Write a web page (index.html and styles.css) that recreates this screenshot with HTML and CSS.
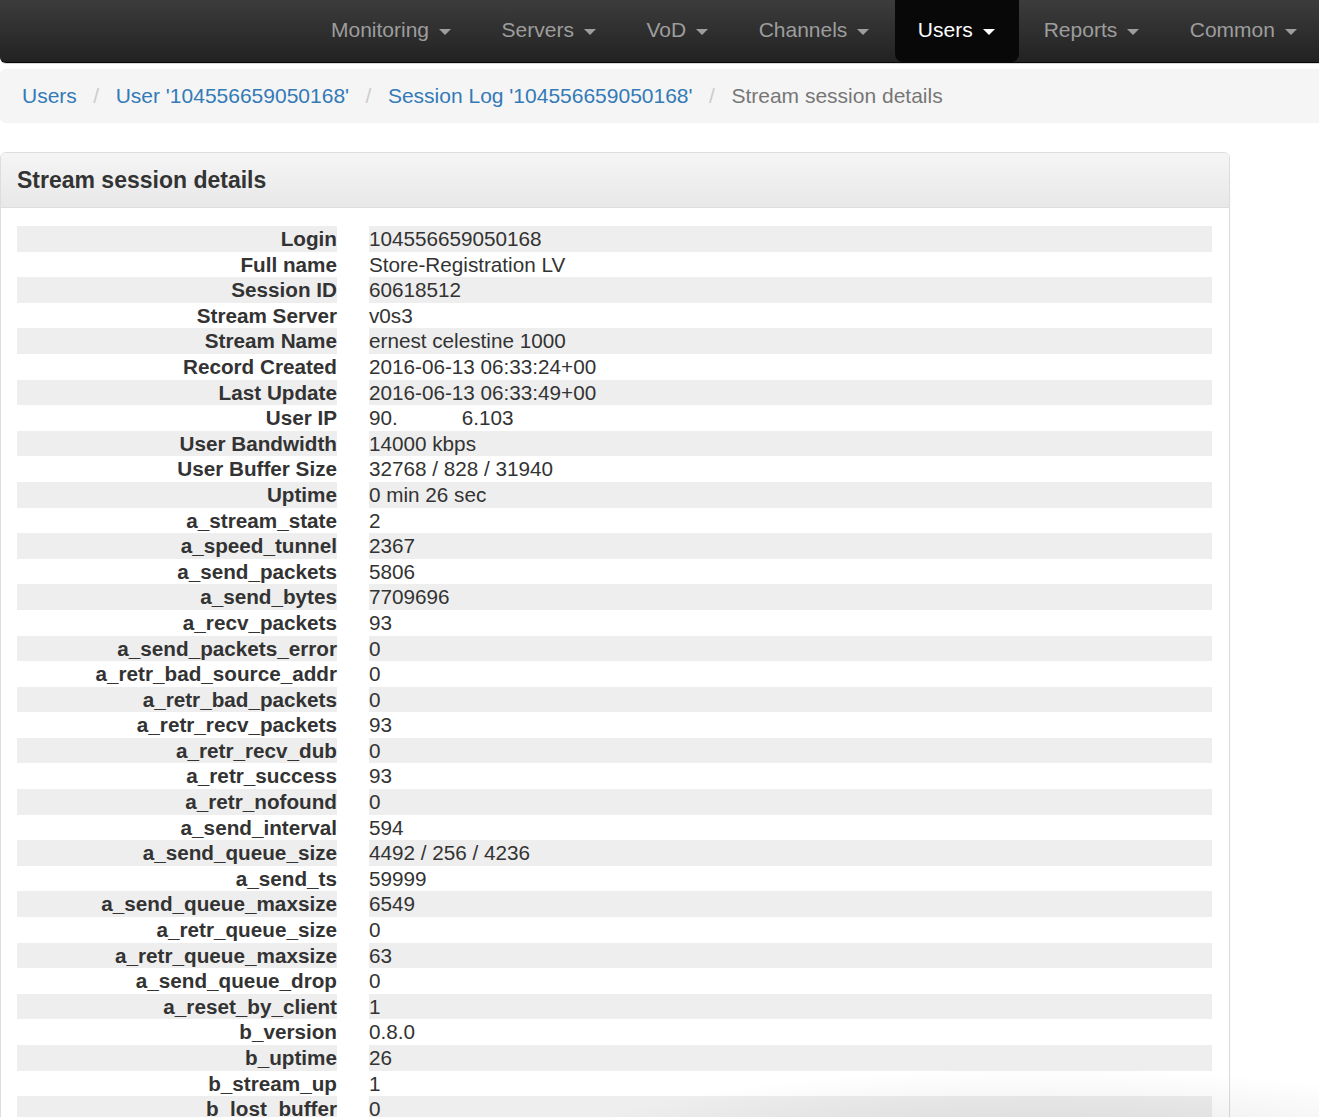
FILE: index.html
```html
<!DOCTYPE html>
<html lang="en">
<head>
<meta charset="utf-8">
<title>Stream session details</title>
<link rel="stylesheet" href="styles.css">
</head>
<body>
<nav class="navbar">
  <ul class="nav">
    <li class="nav-item">Monitoring<span class="caret"></span></li>
    <li class="nav-item">Servers<span class="caret"></span></li>
    <li class="nav-item">VoD<span class="caret"></span></li>
    <li class="nav-item">Channels<span class="caret"></span></li>
    <li class="nav-item active">Users<span class="caret"></span></li>
    <li class="nav-item">Reports<span class="caret"></span></li>
    <li class="nav-item">Common<span class="caret"></span></li>
  </ul>
</nav>

<ol class="breadcrumb">
  <li><a href="#">Users</a></li>
  <li class="sep">/</li>
  <li><a href="#">User '104556659050168'</a></li>
  <li class="sep">/</li>
  <li><a href="#">Session Log '104556659050168'</a></li>
  <li class="sep">/</li>
  <li class="current">Stream session details</li>
</ol>

<section class="panel">
  <header class="panel-heading">Stream session details</header>
  <div class="panel-body">
    <dl class="details">
      <div class="row"><dt>Login</dt><dd>104556659050168</dd></div>
      <div class="row"><dt>Full name</dt><dd>Store-Registration LV</dd></div>
      <div class="row"><dt>Session ID</dt><dd>60618512</dd></div>
      <div class="row"><dt>Stream Server</dt><dd>v0s3</dd></div>
      <div class="row"><dt>Stream Name</dt><dd>ernest celestine 1000</dd></div>
      <div class="row"><dt>Record Created</dt><dd>2016-06-13 06:33:24+00</dd></div>
      <div class="row"><dt>Last Update</dt><dd>2016-06-13 06:33:49+00</dd></div>
      <div class="row"><dt>User IP</dt><dd>90.<span class="redacted"></span>6.103</dd></div>
      <div class="row"><dt>User Bandwidth</dt><dd>14000 kbps</dd></div>
      <div class="row"><dt>User Buffer Size</dt><dd>32768 / 828 / 31940</dd></div>
      <div class="row"><dt>Uptime</dt><dd>0 min 26 sec</dd></div>
      <div class="row"><dt>a_stream_state</dt><dd>2</dd></div>
      <div class="row"><dt>a_speed_tunnel</dt><dd>2367</dd></div>
      <div class="row"><dt>a_send_packets</dt><dd>5806</dd></div>
      <div class="row"><dt>a_send_bytes</dt><dd>7709696</dd></div>
      <div class="row"><dt>a_recv_packets</dt><dd>93</dd></div>
      <div class="row"><dt>a_send_packets_error</dt><dd>0</dd></div>
      <div class="row"><dt>a_retr_bad_source_addr</dt><dd>0</dd></div>
      <div class="row"><dt>a_retr_bad_packets</dt><dd>0</dd></div>
      <div class="row"><dt>a_retr_recv_packets</dt><dd>93</dd></div>
      <div class="row"><dt>a_retr_recv_dub</dt><dd>0</dd></div>
      <div class="row"><dt>a_retr_success</dt><dd>93</dd></div>
      <div class="row"><dt>a_retr_nofound</dt><dd>0</dd></div>
      <div class="row"><dt>a_send_interval</dt><dd>594</dd></div>
      <div class="row"><dt>a_send_queue_size</dt><dd>4492 / 256 / 4236</dd></div>
      <div class="row"><dt>a_send_ts</dt><dd>59999</dd></div>
      <div class="row"><dt>a_send_queue_maxsize</dt><dd>6549</dd></div>
      <div class="row"><dt>a_retr_queue_size</dt><dd>0</dd></div>
      <div class="row"><dt>a_retr_queue_maxsize</dt><dd>63</dd></div>
      <div class="row"><dt>a_send_queue_drop</dt><dd>0</dd></div>
      <div class="row"><dt>a_reset_by_client</dt><dd>1</dd></div>
      <div class="row"><dt>b_version</dt><dd>0.8.0</dd></div>
      <div class="row"><dt>b_uptime</dt><dd>26</dd></div>
      <div class="row"><dt>b_stream_up</dt><dd>1</dd></div>
      <div class="row"><dt>b_lost_buffer</dt><dd>0</dd></div>
    </dl>
  </div>
</section>

<div class="window-shadow"></div>
</body>
</html>
```

FILE: styles.css
```css
html, body {
  margin: 0;
  padding: 0;
  background: #fff;
}

body {
  font-family: "Liberation Sans", Arial, Helvetica, sans-serif;
  color: #333;
  overflow: hidden;
  height: 1117px;
  position: relative;
}

/* ---------- Navbar ---------- */
.navbar {
  height: 62px;
  background: linear-gradient(to bottom, #3c3c3c 0%, #222 100%);
  border-bottom: 1px solid #080808;
  border-bottom-left-radius: 6px;
  box-shadow: 0 1px 0 #d8d8d8;
  overflow: hidden;
}

.nav {
  list-style: none;
  margin: 0;
  padding: 0 0 0 306px;
  display: flex;
  height: 62px;
  white-space: nowrap;
}

.nav-item {
  display: flex;
  align-items: center;
  padding: 0 25.5px 2px 25px;
  font-size: 21px;
  color: #9d9d9d;
  height: 60px;
  flex: none;
}

.nav-item.active {
  color: #fff;
  background: #080808;
  border-radius: 0 0 8px 8px;
  padding: 0 24px 2px 23px;
}

.caret {
  display: inline-block;
  width: 0;
  height: 0;
  margin-left: 10px;
  margin-top: 3px;
  border-top: 6px solid currentColor;
  border-left: 6px solid transparent;
  border-right: 6px solid transparent;
}

/* ---------- Breadcrumb ---------- */
.breadcrumb {
  list-style: none;
  margin: 6px 0 0 0;
  padding: 0 0 0 22px;
  height: 54px;
  display: flex;
  align-items: center;
  background: #f5f5f5;
  border-radius: 6px 0 0 6px;
  font-size: 21px;
}

.breadcrumb a {
  color: #337ab7;
  text-decoration: none;
}

.breadcrumb .sep {
  color: #ccc;
  padding: 0 16.5px;
}

.breadcrumb .current {
  color: #777;
}

/* ---------- Panel ---------- */
.panel {
  margin-top: 29px;
  width: 1228px;
  border: 1px solid #ddd;
  border-radius: 6px 6px 0 0;
  box-shadow: 0 1px 2px rgba(0, 0, 0, 0.05);
}

.panel-heading {
  height: 54px;
  display: flex;
  align-items: center;
  padding: 0 16px;
  background: linear-gradient(to bottom, #f5f5f5 0%, #e8e8e8 100%);
  border-bottom: 1px solid #ddd;
  border-radius: 5px 5px 0 0;
  font-size: 23px;
  font-weight: bold;
  color: #333;
}

.panel-body {
  padding: 18px 17px 18px 16px;
}

.details {
  margin: 0;
  display: flex;
  flex-direction: column;
}

.row {
  display: grid;
  grid-template-columns: 320px 1fr;
  column-gap: 32px;
  font-size: 20.7px;
  line-height: 25.6px;
}

.row dt,
.row dd {
  margin: 0;
  white-space: nowrap;
}

.row dt {
  font-weight: bold;
  text-align: right;
  color: #333;
}

.row dd {
  color: #333;
}

.row:nth-child(odd) dt,
.row:nth-child(odd) dd {
  background: #eeeeee;
}

.redacted {
  display: inline-block;
  width: 64px;
}

/* subtle capture shadow in the lower-right corner */
.window-shadow {
  position: absolute;
  left: 540px;
  right: -60px;
  bottom: -40px;
  height: 90px;
  background: radial-gradient(ellipse at 60% 100%, rgba(0, 0, 0, 0.10) 0%, rgba(0, 0, 0, 0.04) 45%, rgba(0, 0, 0, 0) 70%);
  pointer-events: none;
}
```
